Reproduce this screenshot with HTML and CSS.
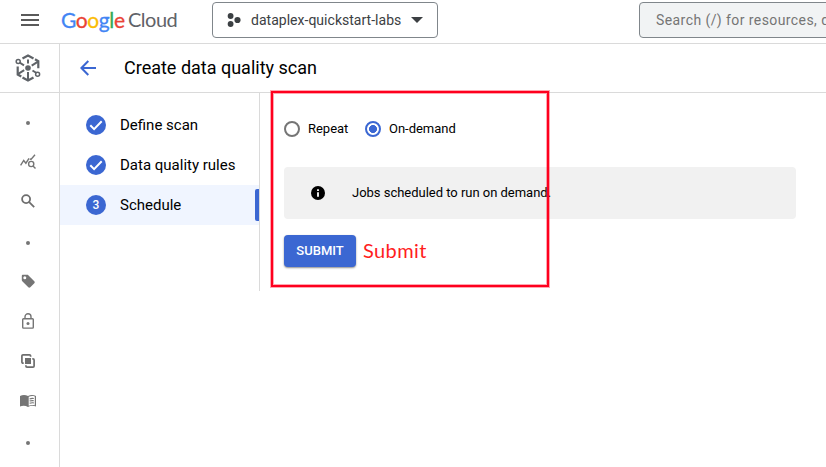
FILE: index.html
```html
<!DOCTYPE html>
<html lang="en">
<head>
<meta charset="utf-8">
<title>Create data quality scan</title>
<link rel="stylesheet" href="styles.css">
</head>
<body>
<header class="topbar">
  <svg class="menu" width="18" height="12" viewBox="0 0 18 12"><path d="M0 1h18M0 6h18M0 11h18" stroke="#5a5a5a" stroke-width="2"/></svg>
  <div class="brand"><span class="google"><span class="b">G</span><span class="r">o</span><span class="y">o</span><span class="b">g</span><span class="g">l</span><span class="r">e</span></span><span class="cloud">Cloud</span></div>
  <div class="project">
    <svg width="14" height="14" viewBox="0 0 14 14" fill="#3c4043"><circle cx="3.6" cy="3" r="2.9"/><circle cx="3.6" cy="11" r="2.9"/><circle cx="10.5" cy="7" r="3.1"/></svg>
    <span class="project-name">dataplex-quickstart-labs</span>
    <svg width="12" height="6" viewBox="0 0 12 6"><path d="M0 0h12L6 6z" fill="#3c4043"/></svg>
  </div>
  <div class="search">Search (/) for resources, docs</div>
</header>
<div class="body">
  <nav class="rail">
    <div class="rail-head">
      <svg width="26" height="28" viewBox="0 0 26 28" fill="none" stroke="#5f6368" stroke-width="2">
        <path d="M7.5 4.5 13 1.5l5.5 3M20 5.3l3.3 1.9v7M2.7 12.5v8l3.6 2M7.5 23.5l5.5 3 5.5-3" stroke-width="2.2"/>
        <path d="M4.5 8.5 9 11.3M17.5 16.5l4 2.5M13 5.5v4M13 18v8M16.7 11.7l6.3-4M9.2 16.2l-6 3.6" />
        <circle cx="13" cy="14" r="2.8" fill="#5f6368" stroke="none"/>
        <circle cx="3.2" cy="7.6" r="2" stroke-width="1.5"/><circle cx="22.6" cy="20.3" r="2" stroke-width="1.5"/>
      </svg>
    </div>
    <ul class="rail-list">
      <li><i class="dot"></i></li>
      <li><svg width="16" height="16" viewBox="0 0 16 16" fill="none" stroke="#757575" stroke-width="1.4"><path d="M.6 11.4 3.7 6.5l2.2 2.7L9 4.4M9.8 4.8l1.2.6L15 .8"/><circle cx="11.2" cy="10" r="2.6"/><path d="m13 12 2.5 2.5"/></svg></li>
      <li><svg width="14" height="14" viewBox="0 0 14 14" fill="none" stroke="#6e6e6e" stroke-width="1.8"><circle cx="5.1" cy="5.1" r="4"/><path d="m8.2 8.2 5 5"/></svg></li>
      <li><i class="dot"></i></li>
      <li><svg width="14" height="14" viewBox="0 0 14 14"><path fill="#757575" fill-rule="evenodd" d="M2 .8h4.200c.5 0 .8.1 1.100.4l6 6c.6.6.6 1.400 0 2l-4 4c-.6.6-1.400.6-2 0l-6-6C1 6.900.8 6.500.8 6V2C.8 1.300 1.300.8 2 .8zM3.800 5.300a1.500 1.500 0 1 0 0-3 1.500 1.500 0 0 0 0 3z"/></svg></li>
      <li><svg width="12" height="16" viewBox="0 0 12 16" fill="none" stroke="#757575" stroke-width="1.4"><rect x=".7" y="5.7" width="10.600" height="9.400" rx=".8"/><path d="M3 5.500V3.800a3 3 0 0 1 6 0v1.700"/><circle cx="6" cy="10.400" r="1.500" fill="#757575" stroke="none"/></svg></li>
      <li><svg width="14" height="14" viewBox="0 0 14 14" fill="none" stroke="#6e6e6e" stroke-width="1.700"><path d="M2.700 9.200H2A1.100 1.100 0 0 1 .9 8.100V2A1.100 1.100 0 0 1 2 .9h6.500A1.100 1.100 0 0 1 9.600 2v.7M11.300 4.800h.7a1.100 1.100 0 0 1 1.100 1.100V12a1.100 1.100 0 0 1-1.100 1.100H6A1.100 1.100 0 0 1 4.900 12v-.8"/><path d="M4 4h6v6H4z" fill="#6e6e6e" stroke="none"/></svg></li>
      <li><svg width="16" height="12" viewBox="0 0 16 12"><path fill="#757575" d="M0 1C2.500-.2 5.500-.2 8 1c2.500-1.200 5.500-1.200 8 0v10.500c-2.500-1-5.500-1-8 .4-2.500-1.400-5.500-1.400-8-.4z"/><path d="M8.700 1.800c1.900-.9 4-1 6.100-.4v8.900c-2.100-.5-4.200-.3-6.100.5z" fill="#fff"/><path d="M9.600 3.900c1.300-.5 2.700-.6 4.200-.4M9.600 6.100c1.300-.5 2.700-.6 4.200-.4M9.600 8.300c1.300-.5 2.700-.6 4.200-.4" fill="none" stroke="#757575" stroke-width="1.100"/></svg></li>
      <li><i class="dot"></i></li>
    </ul>
  </nav>
  <div class="page">
    <div class="titlebar">
      <svg width="16" height="16" viewBox="0 0 16 16" fill="none" stroke="#3b67d2" stroke-width="2"><path d="M16 8H1.500M8.300 1 1.400 8l6.900 7"/></svg>
      <h1>Create data quality scan</h1>
    </div>
    <div class="content">
      <ol class="steps">
        <li><span class="badge"><svg width="20" height="20" viewBox="0 0 20 20"><path d="m4.300 10.300 3.800 3.800 7.600-7.800" fill="none" stroke="#fff" stroke-width="2"/></svg></span><span>Define scan</span></li>
        <li><span class="badge"><svg width="20" height="20" viewBox="0 0 20 20"><path d="m4.300 10.300 3.800 3.800 7.600-7.800" fill="none" stroke="#fff" stroke-width="2"/></svg></span><span>Data quality rules</span></li>
        <li class="current"><span class="badge">3</span><span>Schedule</span></li>
      </ol>
      <main class="form">
        <div class="radios">
          <span class="radio"></span><span class="radio-label">Repeat</span>
          <span class="radio on"></span><span class="radio-label">On-demand</span>
        </div>
        <div class="notice">
          <svg width="14" height="14" viewBox="0 0 14 14"><circle cx="7" cy="7" r="7"/><path d="M6.100 3.200h1.800V5H6.100zM6.100 6.200h1.800v4.600H6.100z" fill="#fff"/></svg>
          <span class="notice-text">Jobs scheduled to run on demand.</span>
        </div>
        <div class="actions"><button class="submit">SUBMIT</button><span class="note">Submit</span></div>
        <div class="highlight"></div>
      </main>
    </div>
  </div>
</div>
</body>
</html>
```
FILE: styles.css
```css
* { box-sizing: border-box; }
body { margin: 0; height: 467px; overflow: hidden; background: #fff; font-family: Roboto, sans-serif; color: #000; }
svg { display: block; flex: none; }
ul, ol { list-style: none; margin: 0; padding: 0; }

.topbar { display: flex; height: 44px; border-bottom: 1px solid #dadada; padding: 2px 0 5px 21px; overflow: hidden; white-space: nowrap; }
.menu { margin-top: 12px; }
.brand { display: flex; flex: none; width: 151px; height: 36px; margin-left: 22px; font: 21px/35px Lato, sans-serif; }
.google { width: 67px; letter-spacing: -0.4px; -webkit-text-stroke: .3px; }
.cloud { color: #5f6368; font-size: 20px; letter-spacing: -0.5px; }
.b { color: #4285f4; } .r { color: #ea4335; } .y { color: #fbbc04; } .g { color: #34a853; }
.project { display: flex; align-items: center; flex: none; width: 226px; height: 36px; border: 1px solid #80868b; border-radius: 4px; padding: 0 14px; color: #3c4043; font-size: 14px; }
.project-name { width: 150px; margin: 0 10px; letter-spacing: .02px; }
.search { flex: none; width: 240px; height: 36px; margin-left: 201px; border: 1px solid #80868b; border-radius: 4px; background: #f1f3f4; color: #757575; padding-left: 16px; font-size: 14px; line-height: 34px; letter-spacing: .42px; }

.body { display: flex; height: 423px; }
.rail { width: 60px; border-right: 1px solid #dadada; }
.rail-head { height: 49px; border-bottom: 1px solid #dadada; padding: 10px 0 0 15px; }
.rail-list { padding: 10px 4px 0 0; }
.rail-list li { display: flex; height: 40px; align-items: center; justify-content: center; }
.rail-list svg { margin-bottom: 4px; }
.rail-list li:nth-child(2) svg { margin-bottom: 2px; }
.dot { width: 4px; height: 4px; border-radius: 50%; background: #757575; }

.page { flex: 1; min-width: 0; }
.titlebar { display: flex; align-items: center; height: 49px; border-bottom: 1px solid #dadada; padding-left: 20px; gap: 28px; }
h1 { margin: 0 0 2px; font-size: 18px; font-weight: 400; letter-spacing: 0; }
.content { display: flex; height: 198px; }
.steps { width: 200px; padding-top: 12px; border-right: 1px solid #dadada; font-size: 15px; }
.steps li { position: relative; display: flex; align-items: center; height: 40px; padding-left: 26px; gap: 14px; letter-spacing: 0; }
.steps .current { background: #f0f5ff; }
.steps .current::after { content: ""; position: absolute; right: 0; top: 4px; width: 4px; height: 32px; border-radius: 2px 0 0 2px; background: #3b67d2; }
.badge { width: 20px; height: 20px; border-radius: 50%; background: #3b67d2; color: #fff; font-size: 12px; font-weight: 500; line-height: 20px; text-align: center; }

.form { position: relative; flex: 1; padding: 28px 30px 0 24px; font-size: 13px; letter-spacing: -.02px; }
.radios { display: flex; align-items: center; height: 16px; }
.radio { width: 16px; height: 16px; border: 2px solid #757575; border-radius: 50%; margin-right: 8px; }
.radio.on { border-color: #3b67d2; background: radial-gradient(circle, #3b67d2 3.700px, transparent 4.300px); }
.radio-label { margin: 0 16px 2px 0; }
.radio-label:nth-child(2) { width: 41px; }
.notice { display: flex; align-items: center; height: 52px; margin-top: 30px; padding-left: 27px; gap: 27px; border-radius: 4px; background: #f1f1f1; }
.notice-text { margin-bottom: 2px; letter-spacing: -.02px; }
.actions { display: flex; align-items: center; height: 32px; margin-top: 16px; }
.submit { width: 72px; height: 32px; padding: 0 0 2px; border: 0; border-radius: 4px; background: #3b67d2; color: #fff; font: 500 13px Roboto, sans-serif; box-shadow: 0 1px 2px rgba(0,0,0,.45); }
.note { margin: 0 0 2px 7px; color: #ff1d1d; font: 20px/32px Lato, sans-serif; letter-spacing: .4px; }
.highlight { position: absolute; left: 11px; top: -2px; width: 278px; height: 196px; border: 2px solid #ff001e; box-shadow: 0 0 0 1px rgba(255,0,30,.35), inset 0 0 0 1px rgba(255,0,30,.35); }
```
